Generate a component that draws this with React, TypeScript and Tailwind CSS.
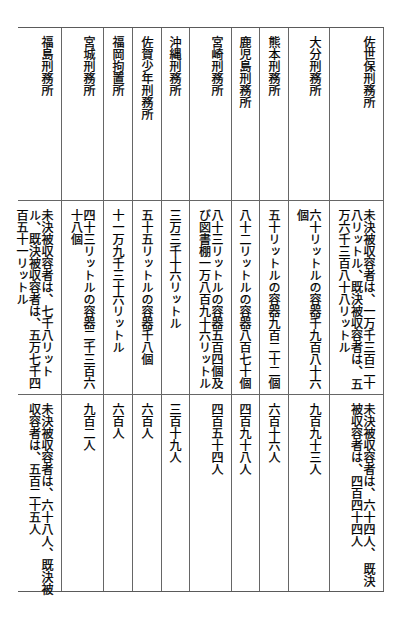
type Line = string | [string, string];

type Col = {
  w: string;
  name: string;
  vol: Line[];
  ppl: Line[];
};

// left to right as printed (the table reads right to left)
const cols: Col[] = [
  {
    w: "w-[44px]",
    name: "福島刑務所",
    vol: ["未決被収容者は、七千八リット", "ル、既決被収容者は、五万七千四", "百五十一リットル"],
    ppl: [["未決被収容者は、六十八人、", "既決被"], "収容者は、五百二十五人"],
  },
  { w: "w-[42px]", name: "宮城刑務所", vol: ["四十三リットルの容器二千三百六", "十八個"], ppl: ["九百二人"] },
  { w: "w-[29px]", name: "福岡拘置所", vol: ["十一万九千三十六リットル"], ppl: ["六百人"] },
  { w: "w-[29px]", name: "佐賀少年刑務所", vol: ["五十五リットルの容器千八個"], ppl: ["六百人"] },
  { w: "w-[28px]", name: "沖縄刑務所", vol: ["三万三千十六リットル"], ppl: ["三百十九人"] },
  {
    w: "w-[42px]",
    name: "宮崎刑務所",
    vol: ["八十三リットルの容器五百四個及", "び図書棚一万八百九十六リットル"],
    ppl: ["四百五十四人"],
  },
  { w: "w-[28px]", name: "鹿児島刑務所", vol: ["八十二リットルの容器八百七十個"], ppl: ["四百九十八人"] },
  { w: "w-[29px]", name: "熊本刑務所", vol: ["五十リットルの容器九百二十二個"], ppl: ["六百十六人"] },
  { w: "w-[41px]", name: "大分刑務所", vol: ["六十リットルの容器千九百八十六", "個"], ppl: ["九百九十三人"] },
  {
    w: "w-[54px]",
    name: "佐世保刑務所",
    vol: ["未決被収容者は、一万千三百二十", ["八リットル、既決被収容者は、", "五"], "万六千三百八十八リットル"],
    ppl: [["未決被収容者は、六十四人、", "既決"], "被収容者は、四百四十四人"],
  },
];

function Lines({ lines }: { lines: Line[] }) {
  return (
    <>
      {lines.map((l, i) =>
        typeof l === "string" ? (
          <div key={i} className="whitespace-nowrap">
            {l}
          </div>
        ) : (
          <div key={i} className="flex justify-between whitespace-nowrap">
            <span>{l[0]}</span>
            <span>{l[1]}</span>
          </div>
        )
      )}
    </>
  );
}

const cell = "pt-2 pr-2 text-[12px] leading-[12.5px] [writing-mode:vertical-rl] [-webkit-text-stroke:0.25px_#000]";

export default function App() {
  return (
    <div
      className="min-h-[631px] w-[411px] bg-white text-black"
      style={{ fontFamily: '"Noto Sans CJK JP", sans-serif' }}
    >
      <div className="pt-[27px] pl-[18px]">
        <div className="flex w-[366px] border-t border-b border-[#5a5a5a]">
          {cols.map((c) => (
            <div key={c.name} className={`${c.w} flex flex-col border-r border-[#666]`}>
              {/* 施設名 */}
              <div className={`h-[173px] border-b border-[#666] ${cell}`}>{c.name}</div>
              {/* 容量 */}
              <div className={`h-[194px] border-b border-[#666] pb-1 ${cell}`}>
                <Lines lines={c.vol} />
              </div>
              {/* 人員 */}
              <div className={`h-[196px] pb-1 ${cell}`}>
                <Lines lines={c.ppl} />
              </div>
            </div>
          ))}
        </div>
      </div>
    </div>
  );
}
